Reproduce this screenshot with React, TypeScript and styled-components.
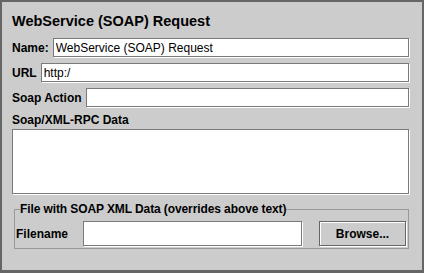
import React from "react";
import styled, { createGlobalStyle } from "styled-components";

const GlobalStyle = createGlobalStyle`
  html, body {
    margin: 0;
    padding: 0;
    background: #cccccc;
  }
  * {
    box-sizing: border-box;
  }
`;

const Frame = styled.div`
  width: 424px;
  height: 273px;
  background: #cccccc;
  border: 2px solid #666666;
  border-bottom-width: 3px;
  padding: 9px 12px 0 10px;
  display: flex;
  flex-direction: column;
  font-family: "Liberation Sans", Arial, sans-serif;
  color: #000;
`;

const Title = styled.h1`
  margin: 0 0 7px 0;
  font-size: 14.5px;
  line-height: 20px;
  font-weight: 700;
`;

const Row = styled.div`
  display: flex;
  align-items: center;
  gap: 4px;
  height: 19px;
  margin-bottom: 6px;
`;

const Label = styled.label`
  font-size: 12px;
  font-weight: 700;
  white-space: nowrap;
`;

const TextField = styled.input<{ $w?: number }>`
  flex: ${(p) => (p.$w ? "none" : "1")};
  width: ${(p) => (p.$w ? `${p.$w}px` : "auto")};
  height: ${(p) => (p.$w ? "25px" : "19px")};
  margin: 0 1px 0 0;
  padding: 0 2px;
  border: 1px solid #7a7a7a;
  box-shadow: 1px 1px 0 #ffffff;
  background: #ffffff;
  font-family: "Liberation Sans", Arial, sans-serif;
  font-size: 12px;
  color: #000;
  outline: none;
`;

const AreaLabel = styled(Label)`
  display: block;
  line-height: 14px;
`;

const DataArea = styled.textarea`
  display: block;
  width: 397px;
  height: 65px;
  margin: 2px 0 0 0;
  border: 1px solid #7a7a7a;
  box-shadow: 1px 1px 0 #ffffff;
  background: #ffffff;
  resize: none;
  outline: none;
`;

const Group = styled.fieldset`
  margin: 8px 0 0 2px;
  width: 394px;
  padding: 5px 2px 2px 1px;
  border: 1px solid #999999;
`;

const Legend = styled.legend`
  padding: 0;
  margin-left: 4px;
  font-size: 12px;
  line-height: 14px;
  font-weight: 700;
  letter-spacing: -0.1px;
`;

const FileRow = styled.div`
  display: flex;
  align-items: center;
  height: 25px;
`;

const FileLabel = styled(Label)`
  width: 67px;
`;

const Button = styled.button`
  margin-left: 16px;
  width: 87px;
  height: 25px;
  background: #cccccc;
  border: 1px solid #666666;
  box-shadow: inset 1px 1px 0 #ffffff, 1px 1px 0 #ffffff;
  font-family: "Liberation Sans", Arial, sans-serif;
  font-size: 12px;
  font-weight: 700;
  color: #000;
  padding: 0;
`;

export default function App() {
  return (
    <>
      <GlobalStyle />
      <Frame>
        <Title>WebService (SOAP) Request</Title>
        <Row>
          <Label>Name:</Label>
          <TextField defaultValue="WebService (SOAP) Request" />
        </Row>
        <Row>
          <Label>URL</Label>
          <TextField defaultValue="http:/" />
        </Row>
        <Row>
          <Label>Soap Action</Label>
          <TextField defaultValue="" />
        </Row>
        <AreaLabel>Soap/XML-RPC Data</AreaLabel>
        <DataArea />
        <Group>
          <Legend>File with SOAP XML Data (overrides above text)</Legend>
          <FileRow>
            <FileLabel>Filename</FileLabel>
            <TextField $w={219} defaultValue="" />
            <Button>Browse...</Button>
          </FileRow>
        </Group>
      </Frame>
    </>
  );
}
